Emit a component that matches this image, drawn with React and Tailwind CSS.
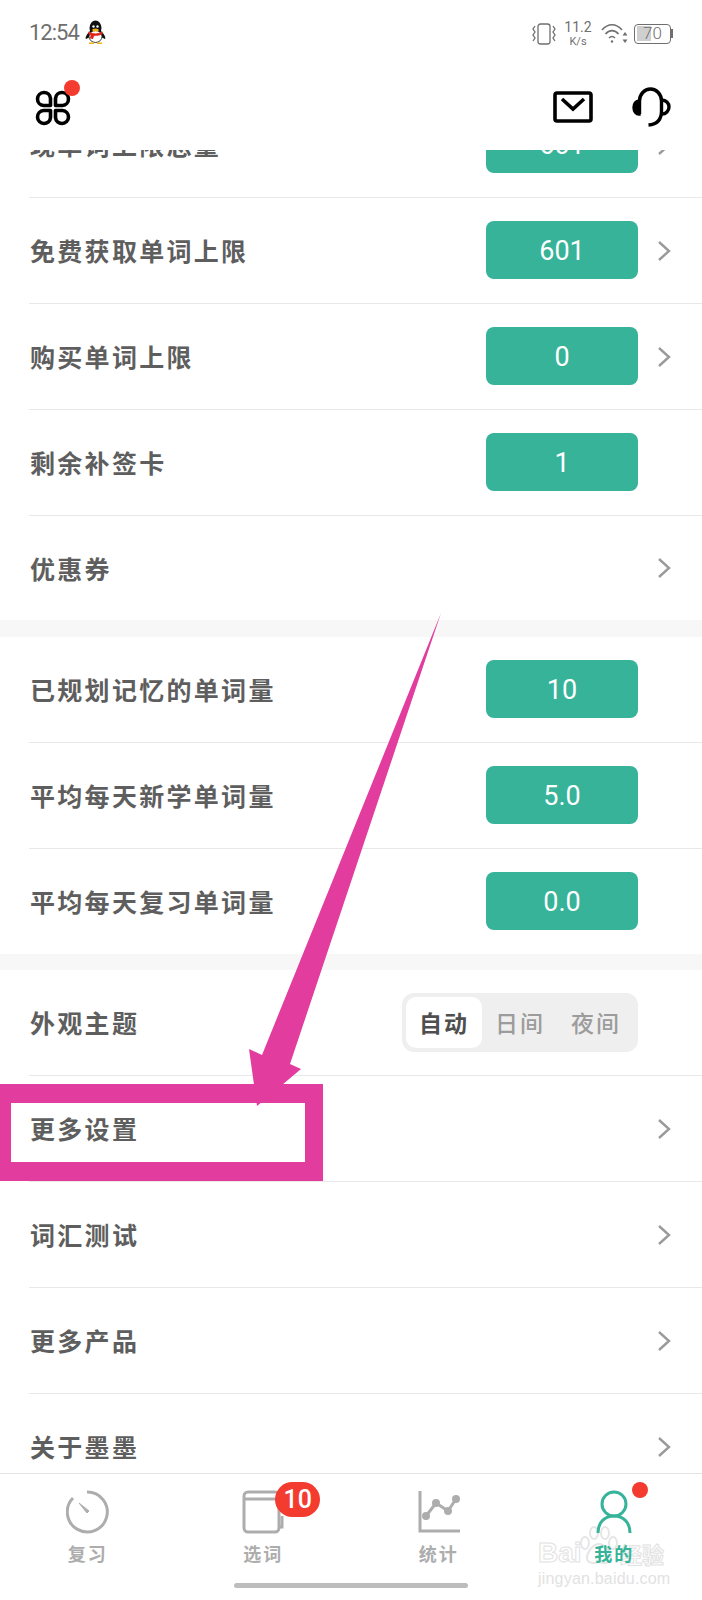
import React from 'react';

const sectionOne = [
  { label: '现单词上限总量', value: '601', arrow: true },
  { label: '免费获取单词上限', value: '601', arrow: true },
  { label: '购买单词上限', value: '0', arrow: true },
  { label: '剩余补签卡', value: '1' },
  { label: '优惠券', arrow: true, last: true, short: true },
];

const sectionTwo = [
  { label: '已规划记忆的单词量', value: '10' },
  { label: '平均每天新学单词量', value: '5.0' },
  { label: '平均每天复习单词量', value: '0.0', last: true },
];

const sectionThree = [
  { label: '更多设置', arrow: true },
  { label: '词汇测试', arrow: true },
  { label: '更多产品', arrow: true },
  { label: '关于墨墨', arrow: true },
];

function Chevron() {
  return (
    <svg width="14" height="22" viewBox="0 0 14 22" fill="none" className="ml-[19px] shrink-0">
      <path d="M2 2l10 9-10 9" stroke="#9a9a9a" strokeWidth="2.4" />
    </svg>
  );
}

function Row({ label, value, arrow, last, short }) {
  return (
    <div className={`${short ? 'h-[104px]' : last ? 'h-[105px]' : 'h-[106px]'} ml-[29px] pl-px flex items-center pr-[31px] ${last ? '' : 'border-b border-[#e8e8e8]'}`}>
      <span className="flex-1 text-[25px] leading-none tracking-[2.3px] font-bold text-[#5e5e5e]">{label}</span>
      {value && (
        <div className="w-[152px] h-[58px] mb-[2px] rounded-[8px] bg-[#36b398] flex items-center justify-center pt-[3px] text-[27px] font-normal text-white font-['Roboto',sans-serif]">
          {value}
        </div>
      )}
      {arrow ? <Chevron /> : <div className="w-[14px] ml-[19px] shrink-0" />}
    </div>
  );
}

function ThemeRow() {
  return (
    <div className="h-[106px] ml-[29px] pl-px flex items-center pr-[64px] border-b border-[#e8e8e8]">
      <span className="flex-1 text-[25px] leading-none tracking-[2.3px] font-bold text-[#5e5e5e]">外观主题</span>
      <div className="w-[236px] h-[59px] rounded-[12px] bg-[#efefef] flex items-center px-1 text-[23px] tracking-[2px] font-medium text-[#9c9c9c]">
        <div className="w-[76px] h-[51px] rounded-[10px] bg-white flex items-center justify-center text-[#4f4f4f] font-bold">自动</div>
        <div className="w-[76px] text-center">日间</div>
        <div className="w-[76px] text-center">夜间</div>
      </div>
    </div>
  );
}

function Penguin() {
  return (
    <svg width="21" height="24" viewBox="0 0 21 24" className="ml-[6px]">
      <ellipse cx="10.5" cy="8" rx="6" ry="7.5" fill="#111" />
      <path d="M5 11 C1 15 0 18 1 19 L5 17 L16 17 L20 19 C21 18 20 15 16 11 Z" fill="#111" />
      <ellipse cx="10.5" cy="16.5" rx="6.5" ry="6" fill="#fff" stroke="#111" strokeWidth="0.8" />
      <path d="M3.5 11.5 C8 14 13 14 17.5 11.5 L17.5 14 C14 16 13 15.5 9 16 L8 19 L5 18.5 L5.5 15 L3.5 14 Z" fill="#e2231a" />
      <ellipse cx="10.5" cy="10" rx="3.2" ry="1.5" fill="#f5b312" />
      <circle cx="8.5" cy="6.5" r="1.2" fill="#fff" />
      <circle cx="12.5" cy="6.5" r="1.2" fill="#fff" />
      <path d="M4 22.5 h5 v1.5 h-5z M12 22.5 h5 v1.5 h-5z" fill="#f5b312" />
    </svg>
  );
}

function StatusRight() {
  return (
    <div className="flex items-center text-[#6f6f6f]">
      <svg width="24" height="22" viewBox="0 0 24 22" fill="none" stroke="#6f6f6f" strokeWidth="1.3">
        <rect x="6" y="1" width="12" height="20" rx="2.5" />
        <path d="M3 3 L1 6 L3 9 L1 12 L3 15 L1 18" />
        <path d="M21 3 L23 6 L21 9 L23 12 L21 15 L23 18" />
      </svg>
      <div className="w-[24px] ml-[10px] flex flex-col items-center font-['Roboto',sans-serif] leading-none">
        <span className="text-[14px]">11.2</span>
        <span className="text-[11px] mt-[2px]">K/s</span>
      </div>
      <svg width="27" height="21" viewBox="0 0 27 21" fill="none" stroke="#6f6f6f" strokeWidth="1.6" className="ml-[11px]">
        <path d="M1 7 C7 0 15 0 21 7" />
        <path d="M4.5 11 C8.5 6.5 13.5 6.5 17.5 11" />
        <path d="M8 15 C10 13 12 13 14 15" />
        <circle cx="11" cy="18.5" r="1.2" fill="#6f6f6f" stroke="none" />
        <path d="M24 9 l-2.5 3.5 h5z M24 20 l-2.5 -3.5 h5z" fill="#6f6f6f" stroke="none" />
      </svg>
      <div className="ml-[6px] flex items-center">
        <div className="w-[37px] h-[20px] rounded-[4px] border-[1.5px] border-[#6f6f6f] p-[1.5px] relative">
          <div className="h-full w-[14px] bg-[#cfcfcf]" />
          <span className="absolute inset-0 flex items-center justify-center text-[17px] leading-none font-['Roboto',sans-serif] font-light text-[#6f6f6f]">70</span>
        </div>
        <div className="w-[2px] h-[9px] bg-[#6f6f6f]" />
      </div>
    </div>
  );
}

function MenuIcon() {
  const petal = 'M15.5 15.5 H8.5 A6.5 6.5 0 1 1 15.5 8.5 Z';
  return (
    <svg width="36" height="36" viewBox="0 0 36 36" fill="none" stroke="#000" strokeWidth="3.6" strokeLinejoin="round">
      <path d={petal} />
      <path d={petal} transform="matrix(-1 0 0 1 36 0)" />
      <path d={petal} transform="matrix(1 0 0 -1 0 36)" />
      <path d={petal} transform="matrix(-1 0 0 -1 36 36)" />
    </svg>
  );
}

function NavItem({ icon, label, active }) {
  return (
    <div className="flex flex-col items-center">
      <div className="h-[44px] flex items-center justify-center relative">{icon}</div>
      <span className={`mt-[9px] text-[18px] leading-[20px] tracking-[2px] font-bold ${active ? 'text-[#36b398]' : 'text-[#adadad]'}`}>{label}</span>
    </div>
  );
}

export default function App() {
  return (
    <div className="relative w-[702px] h-[1600px] overflow-hidden bg-white flex flex-col font-['Noto_Sans_CJK_SC','Noto_Sans',sans-serif]">
      {/* Status bar */}
      <div className="h-[64px] px-[29px] pt-[20px] flex items-start justify-between shrink-0">
        <div className="flex items-center h-[24px]">
          <span className="mt-[2px] text-[22px] leading-none text-[#6f6f6f] font-['Roboto',sans-serif] tracking-[-1px]">12:54</span>
          <Penguin />
        </div>
        <StatusRight />
      </div>

      {/* Top bar */}
      <div className="h-[86px] pl-[35px] pr-[31px] pt-[25px] flex items-start justify-between shrink-0 bg-white">
        <div className="relative mt-[1px]">
          <MenuIcon />
          <div className="absolute -top-[10px] left-[29px] w-4 h-4 rounded-full bg-[#f33b30]" />
        </div>
        <div className="flex items-start gap-[38px] -mt-[2px]">
          <svg width="40" height="32" viewBox="0 0 40 32" fill="none" stroke="#000" strokeWidth="3.6" className="mt-[4px]">
            <rect x="2" y="2" width="36" height="28" rx="2" />
            <path d="M9 8l11 10L31 8" />
          </svg>
          <svg width="40" height="40" viewBox="0 0 40 40" fill="none" stroke="#000" strokeWidth="3.4">
            <path d="M8.5 27V14a11 12 0 0 1 22 0v10q0 13-13 14" />
            <path d="M8 14a5 6.5 0 0 0 0 13z" fill="#000" />
            <path d="M31 13a7 7 0 0 1 0 14" />
          </svg>
        </div>
      </div>

      {/* List, scrolled so the first row is cut by the top bar */}
      <div className="flex-1 overflow-hidden">
        <div className="-mt-[58px]">
          {sectionOne.map(row => <Row key={row.label} {...row} />)}
          <div className="h-[17px] bg-[#f7f7f7]" />
          {sectionTwo.map(row => <Row key={row.label} {...row} />)}
          <div className="h-[16px] bg-[#f7f7f7]" />
          <ThemeRow />
          {sectionThree.map(row => <Row key={row.label} {...row} />)}
        </div>
      </div>

      {/* Bottom tabs */}
      <div className="h-[127px] shrink-0 border-t border-[#e4e4e4] bg-white pt-[16px] relative">
        {/* Baidu watermark, under the tab labels */}
        <div className="absolute left-[538px] top-[52px] w-[126px] h-[62px] font-['Liberation_Sans',sans-serif] leading-none">
          <svg className="absolute left-[42px] top-0" width="38" height="40" viewBox="0 0 38 40" fill="none" stroke="#e6e6e6" strokeWidth="2">
            <ellipse cx="5" cy="17" rx="4" ry="6" />
            <ellipse cx="14" cy="7" rx="4" ry="6" />
            <ellipse cx="25" cy="7" rx="4" ry="6" />
            <ellipse cx="33" cy="17" rx="4" ry="6" />
            <path d="M19 18c-6 0-12 8-12 14 0 5 6 6 12 4 6 2 12 1 12-4 0-6-6-14-12-14z" />
          </svg>
          <div className="absolute left-0 right-0 top-[15px] flex items-center justify-between h-[24px] text-[28px] font-bold text-white [-webkit-text-stroke:1px_#e2e2e2]">
            <span>Bai</span>
            <span className="text-[22px] font-['Noto_Sans_CJK_SC',sans-serif]">经验</span>
          </div>
          <div className="absolute left-0 top-[45px] text-[16px] tracking-[0.2px] whitespace-nowrap text-[#e2e2e2]">jingyan.baidu.com</div>
        </div>

        <div className="grid grid-cols-4 relative">
          <NavItem label="复习" icon={
            <svg width="44" height="44" viewBox="0 0 44 44" fill="none" stroke="#adadad" strokeWidth="3">
              <path d="M21 2A20 20 0 1 1 7 8" />
              <path d="M13 13l10 8-2 2z" fill="#adadad" strokeWidth="1" />
            </svg>
          } />
          <NavItem label="选词" icon={
            <div className="relative">
              <svg width="42" height="44" viewBox="0 0 42 44" fill="none" stroke="#adadad" strokeWidth="3">
                <rect x="2" y="2" width="35" height="40" rx="4" />
                <path d="M2 9h35" />
                <path d="M40 26v11h-3" />
              </svg>
              <div className="absolute -top-[8px] left-[33px] w-[45px] h-[35px] rounded-[18px] bg-[#f33b30] flex items-center justify-center text-[25px] leading-none font-medium text-white font-['Roboto',sans-serif]">10</div>
            </div>
          } />
          <NavItem label="统计" icon={
            <svg width="42" height="44" viewBox="0 0 42 44" fill="#adadad" stroke="#adadad" strokeWidth="3">
              <path d="M2 1v40h40" fill="none" />
              <path d="M8 26l10-13 12 8 8-12" fill="none" />
              <circle cx="8" cy="26" r="2.5" />
              <circle cx="18" cy="13" r="2.5" />
              <circle cx="30" cy="21" r="2.5" />
              <circle cx="38" cy="9" r="2.5" />
            </svg>
          } />
          <NavItem label="我的" active icon={
            <div className="relative">
              <svg width="36" height="44" viewBox="0 0 36 44" fill="none" stroke="#36b398" strokeWidth="3">
                <circle cx="18" cy="14" r="12" />
                <path d="M2 43C2 32 9 26 18 26s16 6 16 17" />
              </svg>
              <div className="absolute -top-[8px] left-[36px] w-4 h-4 rounded-full bg-[#f33b30]" />
            </div>
          } />
        </div>
        <div className="absolute bottom-[12px] left-[234px] w-[234px] h-[5px] rounded-full bg-[#bdbdbd]" />
      </div>

      {/* Pink annotation drawn over the screenshot */}
      <div className="absolute left-0 top-[1084px] w-[323px] h-[97px] border-y-[19px] border-l-[11px] border-r-[18px] border-[#e23c9e]" />
      <svg className="absolute left-0 top-0 pointer-events-none" width="702" height="1600" viewBox="0 0 702 1600">
        <polygon points="441,613 290,1064 301,1069 257,1106 249,1049 262,1055" fill="#e23c9e" />
      </svg>
    </div>
  );
}
